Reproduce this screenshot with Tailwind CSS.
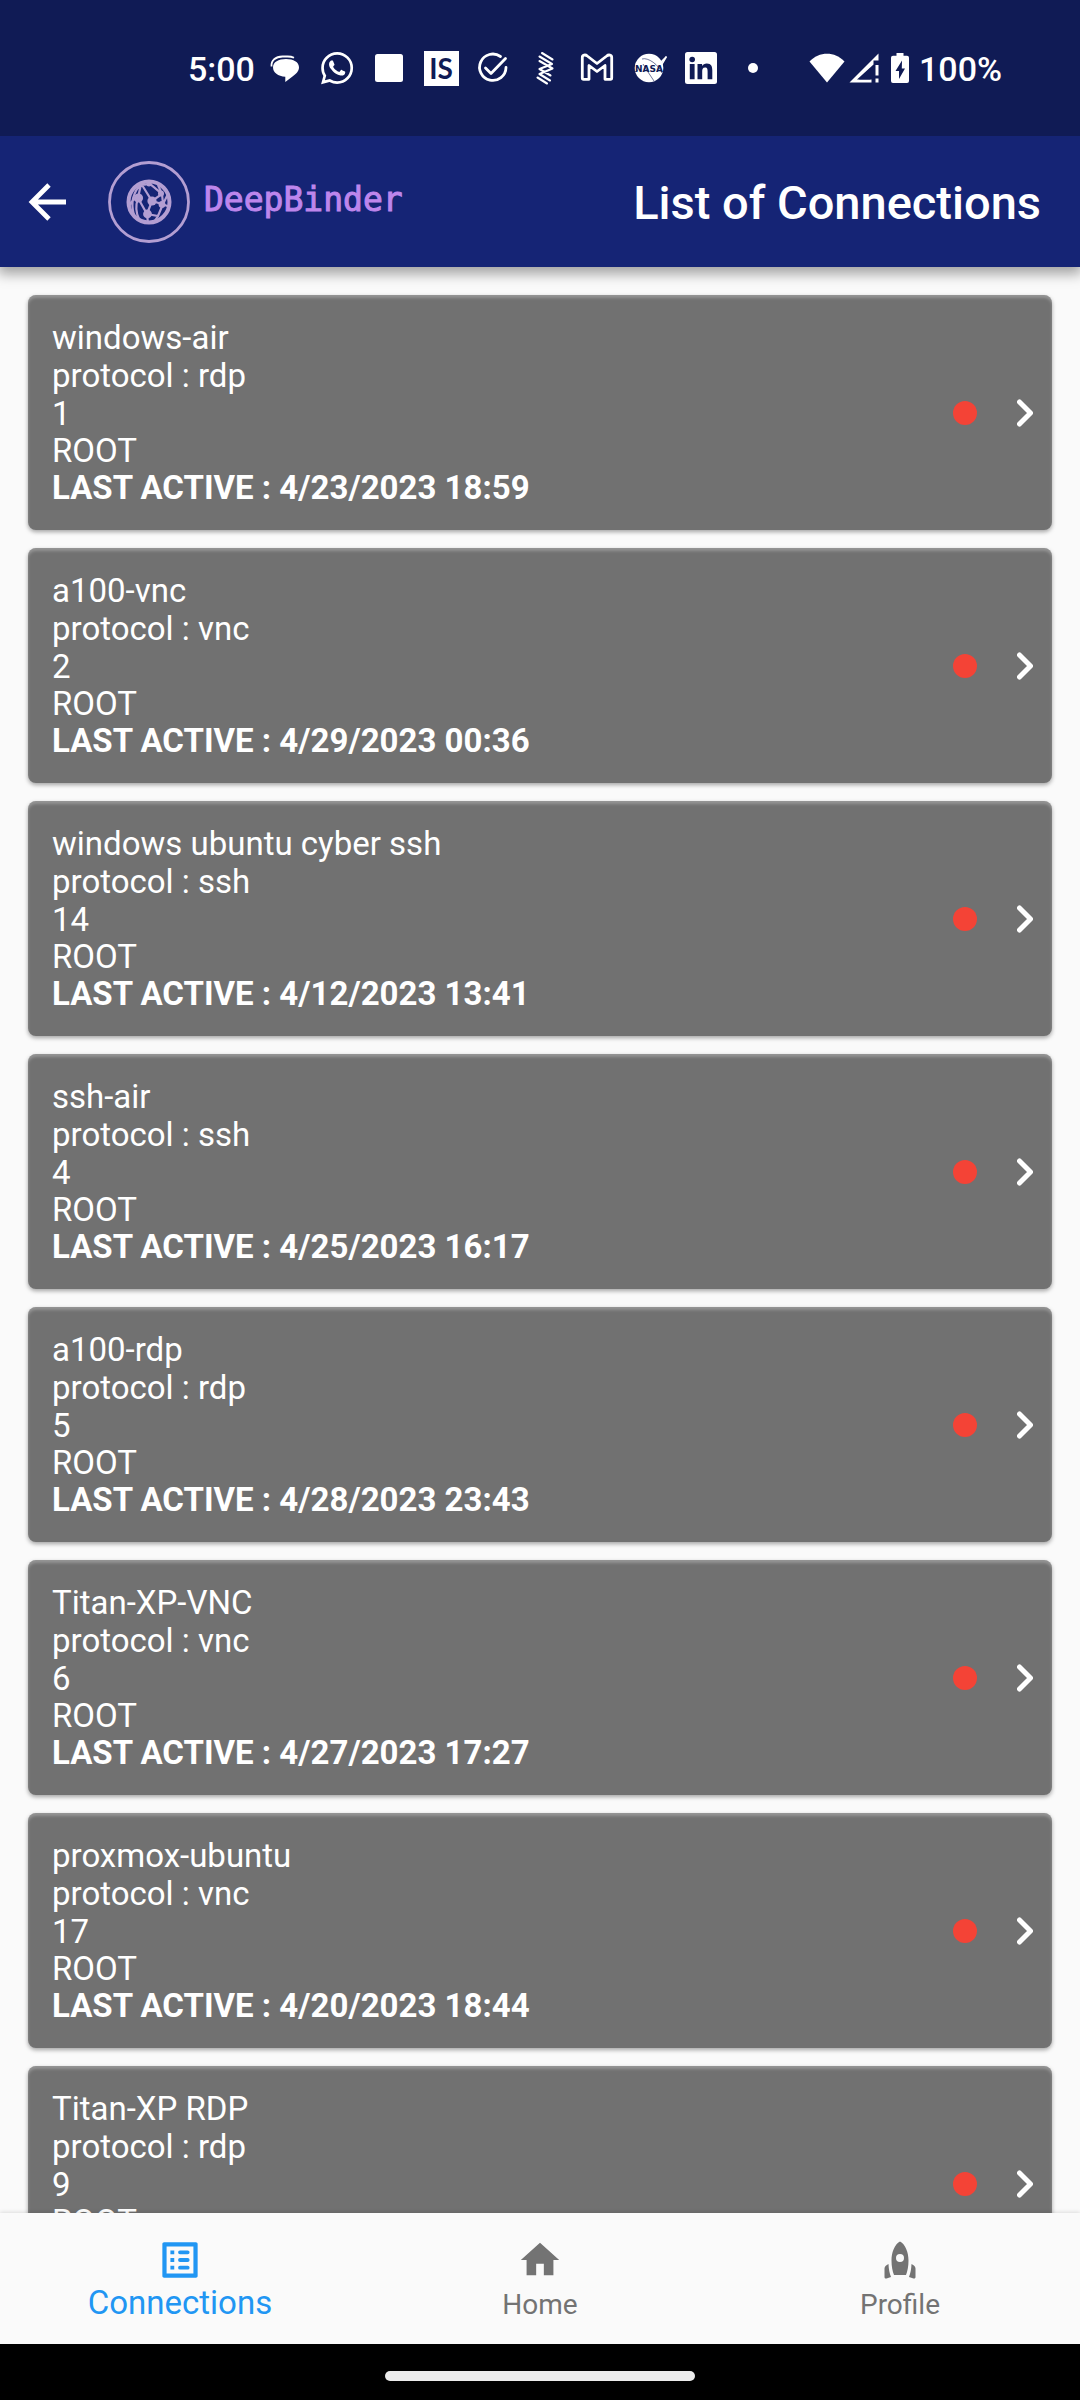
<!DOCTYPE html>
<html lang="en">
<head>
<meta charset="utf-8">
<meta name="viewport" content="width=device-width, initial-scale=1">
<title>DeepBinder – List of Connections</title>
<script src="https://cdn.jsdelivr.net/npm/@tailwindcss/browser@4"></script>
</head>
<body class="flex h-screen flex-col overflow-hidden bg-[#fafafa] font-[Roboto,sans-serif] text-white">

<!-- Shared card icon -->
<svg class="hidden" aria-hidden="true">
  <symbol id="chevron" viewBox="0 0 16 28"><path d="M2.5 3 13.5 14 2.5 25" fill="none" stroke="currentColor" stroke-width="5" stroke-linecap="round" stroke-linejoin="round"/></symbol>
</svg>

<!-- System status bar -->
<div class="relative z-20 flex h-[136px] shrink-0 items-center bg-[#101b55] pr-[78px] pl-[188px] text-[34px] leading-10 font-medium">
  <span class="w-[71px] pt-0.5">5:00</span>
  <div class="flex">
    <svg class="size-[52px]" viewBox="0 0 52 52"><path d="M27 17c7.500 0 13 3 13 8.300 0 4.200-3 6.700-6.500 9.200L26.300 40v-5.200C19 34.500 14 30.500 14 25.300 14 20 19.500 17 27 17z" fill="#fff"/><path d="M12.500 24.500c-.5-6 4-10 11-10h5c3 0 5 .5 6.500 1.200" fill="none" stroke="#fff" stroke-width="1.800"/></svg>
    <svg class="size-[52px]" viewBox="0 0 52 52"><path transform="translate(10 10) scale(1.340)" fill="#fff" d="M17.472 14.382c-.297-.149-1.758-.867-2.030-.967-.273-.099-.471-.148-.67.15-.197.297-.767.966-.94 1.164-.173.199-.347.223-.644.075-.297-.15-1.255-.463-2.390-1.475-.883-.788-1.480-1.761-1.653-2.059-.173-.297-.018-.458.13-.606.134-.133.298-.347.446-.52.149-.174.198-.298.298-.497.099-.198.05-.371-.025-.52-.075-.149-.669-1.612-.916-2.207-.242-.579-.487-.5-.669-.51-.173-.008-.371-.01-.57-.01-.198 0-.52.074-.792.372-.272.297-1.040 1.016-1.040 2.479 0 1.462 1.065 2.875 1.213 3.074.149.198 2.096 3.200 5.077 4.487.709.306 1.262.489 1.694.625.712.227 1.360.195 1.871.118.571-.085 1.758-.719 2.006-1.413.248-.694.248-1.289.173-1.413-.074-.124-.272-.198-.57-.347m-5.421 7.403h-.004a9.870 9.870 0 0 1-5.031-1.378l-.361-.214-3.741.982.998-3.648-.235-.374a9.860 9.860 0 0 1-1.510-5.260c.001-5.450 4.436-9.884 9.888-9.884 2.640 0 5.122 1.030 6.988 2.898a9.825 9.825 0 0 1 2.893 6.994c-.003 5.450-4.437 9.884-9.885 9.884m8.413-18.297A11.815 11.815 0 0 0 12.050 0C5.495 0 .16 5.335.157 11.892c0 2.096.547 4.142 1.588 5.945L.057 24l6.305-1.654a11.882 11.882 0 0 0 5.683 1.448h.005c6.554 0 11.890-5.335 11.893-11.893a11.821 11.821 0 0 0-3.480-8.413z"/></svg>
    <svg class="size-[52px]" viewBox="0 0 52 52"><rect x="12" y="12" width="28" height="28" rx="2.500" fill="#fff"/></svg>
    <span class="flex size-[52px] items-center justify-center"><span class="flex size-[35px] items-center justify-center bg-white font-[Lato,sans-serif] text-[28px] font-bold text-[#101b55]">IS</span></span>
    <svg class="size-[52px]" viewBox="0 0 52 52" fill="none" stroke="#fff" stroke-width="2.800" stroke-linecap="round" stroke-linejoin="round"><path d="M33.500 14.500A13.200 13.200 0 1 0 39 25.500"/><path d="M18.500 26 24 31.500 38.500 16.500"/></svg>
    <svg class="size-[52px]" viewBox="0 0 52 52" fill="none" stroke="#fff" stroke-width="2.100" stroke-linecap="round" stroke-linejoin="round"><path d="M23 11 33.500 17.500M20.500 14.500 33 22 20.500 27 31.500 33.500M20.500 19 33.500 26.500 20.500 32M20.500 32 31 38.500M18.500 35.500 28 41.500"/></svg>
    <svg class="size-[52px]" viewBox="0 0 52 52" fill="none" stroke="#fff" stroke-width="2.800" stroke-linejoin="round"><path d="M11.300 36V15.500c0-2.600 3-3.200 5-1.500L26 21.500l9.700-7.500c2-1.700 5-1.100 5 1.500V36c0 .8-.5 1.300-1.300 1.300H34V23.500l-8 6-8-6v13.800h-5.400c-.8 0-1.300-.5-1.300-1.300z"/></svg>
    <svg class="size-[52px]" viewBox="0 0 52 52"><circle cx="26" cy="26" r="14.300" fill="#fff"/><path d="M34 24 43.500 14.500 36 27" fill="none" stroke="#fff" stroke-width="1.500"/><path d="M19 17c6-2 17 6 20 14M10 31l5-3M31 39 25 30 20 22" fill="none" stroke="#101b55" stroke-width=".6"/><text x="26" y="30" text-anchor="middle" font-family="DejaVu Sans" font-size="9" font-weight="700" fill="#101b55">NASA</text></svg>
    <svg class="size-[52px]" viewBox="0 0 52 52"><rect x="10" y="10" width="32" height="32" rx="2.500" fill="#fff"/><g fill="#101b55"><circle cx="17.200" cy="17.500" r="2.800"/><path d="M14.800 22h4.800v15.200h-4.800zM22.500 22h4.600v2.100c.9-1.500 2.500-2.500 4.700-2.500 4.600 0 5.500 3 5.500 7v8.600h-4.700v-7.600c0-1.900-.1-4-2.500-4-2.500 0-2.900 1.900-2.900 3.900v7.700h-4.700z"/></g></svg>
    <svg class="size-[52px]" viewBox="0 0 52 52"><circle cx="26" cy="26" r="5" fill="#fff"/></svg>
  </div>
  <div class="ml-auto flex items-center">
    <svg class="h-[30px] w-9" viewBox="0 0 36 30"><path d="M.5 8.500C10 -2 26 -2 35.500 8.500L18 29.500z" fill="#fff"/></svg>
    <svg class="ml-1 h-[30px] w-[30px]" viewBox="0 0 30 30"><path d="M29.500.5V7.500H24.500v4L8 26.500h14.500v3H.5zM26.500 12h3v10.500h-3zM26.500 25.500h3v4h-3z" fill="#fff"/><path d="M10 26.500 21.500 15v11.500z" fill="#101b55"/></svg>
    <svg class="ml-3 h-[30px] w-[18px]" viewBox="0 0 18 30"><path d="M5.500 0h7v2.800H16a2 2 0 0 1 2 2V28a2 2 0 0 1-2 2H2a2 2 0 0 1-2-2V4.800a2 2 0 0 1 2-2h3.500z" fill="#fff"/><path d="M11 7.500 4.500 18H8v8l6-10.500h-3.200z" fill="#101b55"/></svg>
    <span class="ml-2.5 pt-0.5">100%</span>
  </div>
</div>

<!-- App bar -->
<header class="relative z-10 flex h-[131px] shrink-0 items-center bg-[#152475] pr-[39px] pl-7 shadow-[0_5px_12px_2px_rgba(0,0,0,0.35)]">
  <button type="button" aria-label="Back">
    <svg class="size-[38px]" viewBox="0 0 38 38"><path d="M21 2 4 19 21 36M4 19H38" fill="none" stroke="#fff" stroke-width="4.800"/></svg>
  </button>
  <a href="#" class="ml-[42px] flex items-center gap-3.5">
    <svg class="size-[82px]" viewBox="0 0 82 82" fill="none" stroke="#b39ed2">
      <circle cx="41" cy="41" r="39.500" stroke-width="2.800"/>
      <circle cx="41" cy="41" r="20.500" stroke-width="4"/>
      <path stroke-width="2.200" d="M33 23 30 37 39 53 44 40 54 33 42 23 34 24 44 40 54 43 62 46M54 33 55 43 50 55 39 53 40 62M30 37C27 46 28 52 31 58M30 37C25 38 22 42 21 47M34 22C24 32 23 44 26 54M54 33 50 24M55 43 60 33M50 55 46 61"/>
      <g fill="#b39ed2" stroke="none"><circle cx="30.500" cy="37" r="4.600"/><circle cx="44" cy="40" r="4.600"/><circle cx="39.500" cy="53" r="4.400"/><circle cx="53" cy="32.500" r="3"/><circle cx="54" cy="43.500" r="3.400"/><circle cx="41" cy="23" r="2.500"/></g>
    </svg>
    <span class="pb-1 font-['DejaVu_Sans_Mono',monospace] text-[33px] leading-10 text-[#bd86ec] [-webkit-text-stroke:1px_#bd86ec]">DeepBinder</span>
  </a>
  <h1 class="ml-auto pt-0.5 text-[47px] leading-[54px] font-medium">List of Connections</h1>
</header>

<!-- Connections -->
<main class="min-h-0 flex-1 overflow-y-auto px-7 pt-7 text-[33px] leading-[37px] [scrollbar-width:none]">
  <ul class="flex flex-col gap-[18px]">
    <li><a href="#" class="flex items-center rounded-lg bg-[#717171] py-6 pr-[19px] pl-6 shadow-[0_2px_4px_rgba(0,0,0,0.35),inset_0_3px_3px_rgba(255,255,255,0.25)]">
      <div class="flex-1"><h2 class="leading-[38px]">windows-air</h2><p class="leading-[38px]">protocol : rdp</p><p>1</p><p>ROOT</p><p class="font-bold">LAST ACTIVE : 4/23/2023 18:59</p></div>
      <span class="mr-10 size-6 rounded-full bg-[#f44336]"></span><svg class="h-7 w-4"><use href="#chevron"/></svg></a></li>
    <li><a href="#" class="flex items-center rounded-lg bg-[#717171] py-6 pr-[19px] pl-6 shadow-[0_2px_4px_rgba(0,0,0,0.35),inset_0_3px_3px_rgba(255,255,255,0.25)]">
      <div class="flex-1"><h2 class="leading-[38px]">a100-vnc</h2><p class="leading-[38px]">protocol : vnc</p><p>2</p><p>ROOT</p><p class="font-bold">LAST ACTIVE : 4/29/2023 00:36</p></div>
      <span class="mr-10 size-6 rounded-full bg-[#f44336]"></span><svg class="h-7 w-4"><use href="#chevron"/></svg></a></li>
    <li><a href="#" class="flex items-center rounded-lg bg-[#717171] py-6 pr-[19px] pl-6 shadow-[0_2px_4px_rgba(0,0,0,0.35),inset_0_3px_3px_rgba(255,255,255,0.25)]">
      <div class="flex-1"><h2 class="leading-[38px]">windows ubuntu cyber ssh</h2><p class="leading-[38px]">protocol : ssh</p><p>14</p><p>ROOT</p><p class="font-bold">LAST ACTIVE : 4/12/2023 13:41</p></div>
      <span class="mr-10 size-6 rounded-full bg-[#f44336]"></span><svg class="h-7 w-4"><use href="#chevron"/></svg></a></li>
    <li><a href="#" class="flex items-center rounded-lg bg-[#717171] py-6 pr-[19px] pl-6 shadow-[0_2px_4px_rgba(0,0,0,0.35),inset_0_3px_3px_rgba(255,255,255,0.25)]">
      <div class="flex-1"><h2 class="leading-[38px]">ssh-air</h2><p class="leading-[38px]">protocol : ssh</p><p>4</p><p>ROOT</p><p class="font-bold">LAST ACTIVE : 4/25/2023 16:17</p></div>
      <span class="mr-10 size-6 rounded-full bg-[#f44336]"></span><svg class="h-7 w-4"><use href="#chevron"/></svg></a></li>
    <li><a href="#" class="flex items-center rounded-lg bg-[#717171] py-6 pr-[19px] pl-6 shadow-[0_2px_4px_rgba(0,0,0,0.35),inset_0_3px_3px_rgba(255,255,255,0.25)]">
      <div class="flex-1"><h2 class="leading-[38px]">a100-rdp</h2><p class="leading-[38px]">protocol : rdp</p><p>5</p><p>ROOT</p><p class="font-bold">LAST ACTIVE : 4/28/2023 23:43</p></div>
      <span class="mr-10 size-6 rounded-full bg-[#f44336]"></span><svg class="h-7 w-4"><use href="#chevron"/></svg></a></li>
    <li><a href="#" class="flex items-center rounded-lg bg-[#717171] py-6 pr-[19px] pl-6 shadow-[0_2px_4px_rgba(0,0,0,0.35),inset_0_3px_3px_rgba(255,255,255,0.25)]">
      <div class="flex-1"><h2 class="leading-[38px]">Titan-XP-VNC</h2><p class="leading-[38px]">protocol : vnc</p><p>6</p><p>ROOT</p><p class="font-bold">LAST ACTIVE : 4/27/2023 17:27</p></div>
      <span class="mr-10 size-6 rounded-full bg-[#f44336]"></span><svg class="h-7 w-4"><use href="#chevron"/></svg></a></li>
    <li><a href="#" class="flex items-center rounded-lg bg-[#717171] py-6 pr-[19px] pl-6 shadow-[0_2px_4px_rgba(0,0,0,0.35),inset_0_3px_3px_rgba(255,255,255,0.25)]">
      <div class="flex-1"><h2 class="leading-[38px]">proxmox-ubuntu</h2><p class="leading-[38px]">protocol : vnc</p><p>17</p><p>ROOT</p><p class="font-bold">LAST ACTIVE : 4/20/2023 18:44</p></div>
      <span class="mr-10 size-6 rounded-full bg-[#f44336]"></span><svg class="h-7 w-4"><use href="#chevron"/></svg></a></li>
    <li><a href="#" class="flex items-center rounded-lg bg-[#717171] py-6 pr-[19px] pl-6 shadow-[0_2px_4px_rgba(0,0,0,0.35),inset_0_3px_3px_rgba(255,255,255,0.25)]">
      <div class="flex-1 pb-[37px]"><h2 class="leading-[38px]">Titan-XP RDP</h2><p class="leading-[38px]">protocol : rdp</p><p>9</p><p>ROOT</p></div>
      <span class="mr-10 size-6 rounded-full bg-[#f44336]"></span><svg class="h-7 w-4"><use href="#chevron"/></svg></a></li>
  </ul>
</main>

<!-- Bottom navigation -->
<nav class="relative z-10 grid h-[131px] shrink-0 grid-cols-3 bg-[#fafafa] pt-6 text-[28px] leading-[44px] text-[#737373] shadow-[0_-1px_4px_rgba(0,0,0,0.12)]">
  <a href="#" aria-current="page" class="flex flex-col items-center text-[33px] leading-10 text-[#2196f3]">
    <svg class="size-[46px]" viewBox="0 0 24 24" fill="currentColor"><path fill-rule="evenodd" d="M3.700 2.800h16.600c.5 0 .9.4.9.900v16.600c0 .5-.4.9-.9.900H3.700c-.5 0-.9-.4-.9-.9V3.700c0-.5.4-.9.9-.9zM5 5v14h14V5z"/><path d="M7 7h2v2H7zM7 11h2v2H7zM7 15h2v2H7z"/><path d="M12 8h4M12 12h4M12 16h4" stroke="currentColor" stroke-width="2" stroke-linecap="round"/></svg>
    <span>Connections</span>
  </a>
  <a href="#" class="flex flex-col items-center">
    <svg class="size-[46px]" viewBox="0 0 24 24" fill="currentColor"><path d="M10 20v-6h4v6h5v-8h3L12 3 2 12h3v8z"/></svg>
    <span>Home</span>
  </a>
  <a href="#" class="flex flex-col items-center">
    <svg class="size-[46px]" viewBox="0 0 46 46" fill="currentColor"><path fill-rule="evenodd" d="M23 4.500c5.500 3 8.500 11 8.500 19 0 6-1 10.500-2.500 14.500H17c-1.500-4-2.500-8.500-2.500-14.500 0-8 3-16 8.500-19zM23 17a4 4 0 1 0 0 8 4 4 0 0 0 0-8zM11.500 27c.2 5 1 9 2.500 13l-4.500 1.500c-1 .3-2-.4-2-1.500v-8.500c0-1.500 1.500-3.500 4-4.500zM34.500 27c-.2 5-1 9-2.500 13l4.500 1.500c1 .3 2-.4 2-1.500v-8.500c0-1.500-1.500-3.500-4-4.500z"/></svg>
    <span>Profile</span>
  </a>
</nav>

<!-- System gesture bar -->
<div class="flex h-14 shrink-0 items-center justify-center bg-black pt-2">
  <div class="h-2.5 w-[310px] rounded-full bg-[#ececec]"></div>
</div>

</body>
</html>
